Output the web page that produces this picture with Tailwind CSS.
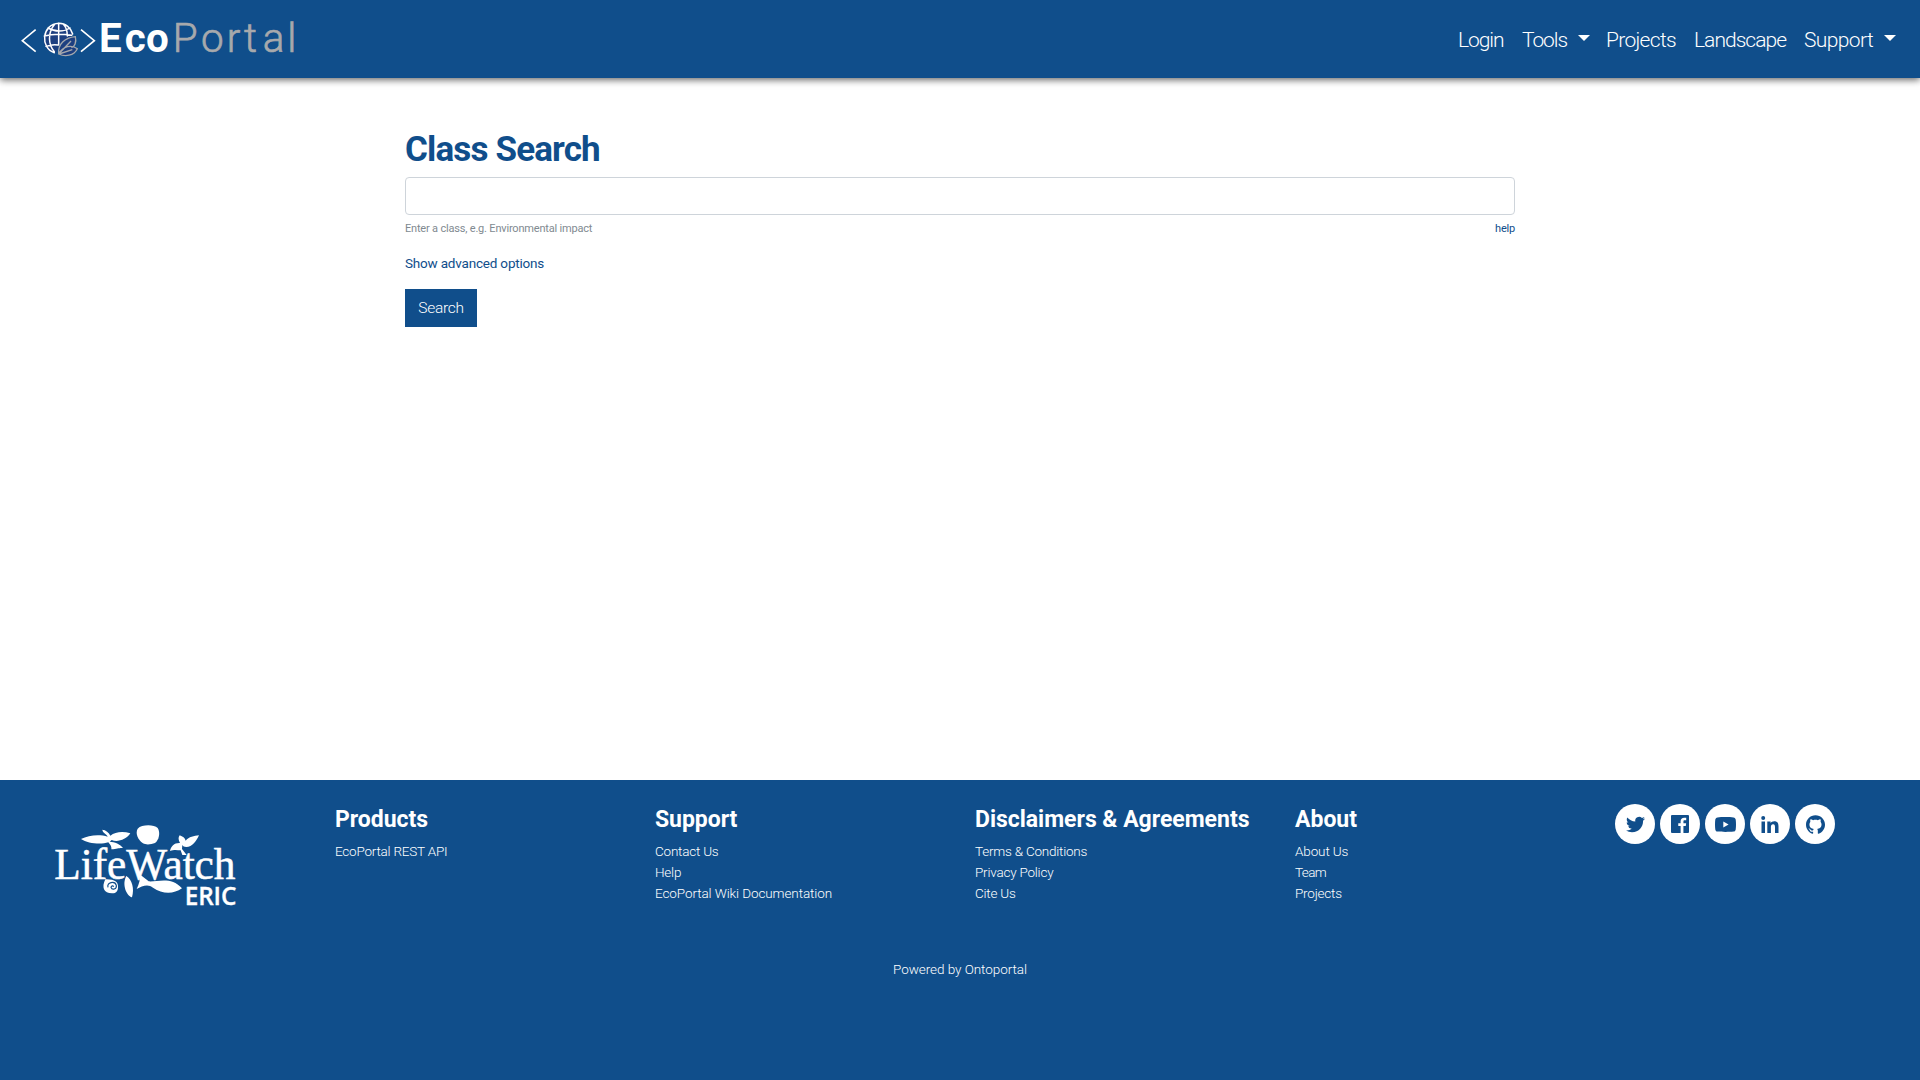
<!DOCTYPE html>
<html lang="en">
<head>
<meta charset="utf-8">
<title>EcoPortal - Class Search</title>
<script src="https://cdn.jsdelivr.net/npm/@tailwindcss/browser@4"></script>
</head>
<body class="flex h-screen flex-col overflow-hidden bg-white font-['Roboto',sans-serif]">
<header class="relative flex h-[78px] shrink-0 items-center justify-between bg-[#104e8b] pr-6 shadow-[0_2px_7px_rgba(0,0,0,0.6)]">
  <a href="#" aria-label="EcoPortal">
    <svg class="block h-[78px] w-[320px]" viewBox="0 0 960 234" fill="none">
      <g stroke="#fff" stroke-width="5">
        <path d="M107 89 67 122l40 33M243 89l40 33-40 33"/>
      </g>
      <path d="M178 71c-60 0-63 85-10 88l12-27 38-25c-3-22-20-36-40-36z" fill="#1d3f80"/>
      <path d="M163 158c-42-12-40-86 14-88 20 0 36 14 41 32M176 70v65M164 73c-21 25-20 60-1 82M190 73c8 8 12 20 12 35M144 84c20 12 48 12 66 0M133 108c20-5 55-6 82-2M138 139c14-5 23-6 36-4" stroke="#fff" stroke-width="4.5" stroke-linecap="round"/>
      <path d="M176 162c-3-30 18-49 50-52 4 17-2 30-12 33M176 162c13-24 39-29 56-16-10 22-37 25-56 16zM176 162l37-39M177 162l40-13" fill="#1d3f80" stroke="#a5a8ad" stroke-width="4"/>
      <text y="156" x="297 374 438" font-family="Roboto" font-weight="700" font-size="121" fill="#fff">Eco</text>
      <text y="156" x="518 603 680 732 788 862" font-family="Roboto" font-weight="300" font-size="121" fill="#a7a9ac" stroke="#a7a9ac" stroke-width="2">Portal</text>
    </svg>
  </a>
  <nav class="flex gap-4 pt-0.5 text-[21px] leading-8 font-light whitespace-nowrap text-white">
    <a href="#" class="w-[47px] -ml-px pr-px box-content tracking-[-1.05px]">Login</a>
    <a href="#" class="flex w-[68px] justify-between tracking-[-1.1px]">Tools<span class="mt-[11px] h-0 w-0 border-x-[6px] border-t-[6px] border-x-transparent border-t-white"></span></a>
    <a href="#" class="w-[72px] tracking-[-0.69px]">Projects</a>
    <a href="#" class="w-[94px] tracking-[-0.97px]">Landscape</a>
    <a href="#" class="flex w-[92px] justify-between tracking-[-0.62px]">Support<span class="mt-[11px] h-0 w-0 border-x-[6px] border-t-[6px] border-x-transparent border-t-white"></span></a>
  </nav>
</header>
<main class="mx-auto w-[1110px] grow pt-[50px] text-[13.5px] text-[#104e8b]">
  <h1 class="mb-[5px] text-[35px] leading-11 font-bold tracking-[-0.85px]">Class Search</h1>
  <input type="text" aria-label="Class" class="block h-[38px] w-full rounded border border-[#ced4da] bg-white px-3">
  <div class="mt-[5px] flex justify-between text-[11px] leading-[17px] tracking-[-0.19px]">
    <span class="text-[#818a91]">Enter a class, e.g. Environmental impact</span>
    <a href="#">help</a>
  </div>
  <a href="#" class="mt-4 block leading-5 tracking-[-0.19px]">Show advanced options</a>
  <button class="mt-4 block h-[38px] w-[72px] bg-[#104e8b] pt-px text-[15.5px] font-light tracking-[-0.3px] text-white">Search</button>
</main>
<footer class="h-[300px] shrink-0 bg-[#104e8b] pt-6 text-[13.5px] leading-[21px] text-white">
  <div class="grid h-[155px] grid-cols-[320px_320px_320px_320px_1fr] pl-[15px] tracking-[-0.22px]">
    <div class="pt-4 pl-[35px]">
      <svg class="block h-[90px] w-[190px] overflow-visible" viewBox="60 150 570 270" fill="#fff" aria-label="LifeWatch ERIC">
        <text x="73" y="326" font-family="Liberation Serif" font-size="132" textLength="543" lengthAdjust="spacingAndGlyphs" stroke="#fff" stroke-width="1.5">LifeWatch</text>
        <text x="464" y="404" font-family="Open Sans" font-weight="600" font-size="74" textLength="155" lengthAdjust="spacingAndGlyphs" stroke="#fff" stroke-width="1">ERIC</text>
        <path d="M153 207c23-12 56-15 80-7-3-8-15-11-16-21 10 1 20 8 24 18 15-12 38-14 60-7-12 19-39 28-56 20l-6 5c15 1 32 7 40 19-12-1-17 3-35 4 2-9-5-16-9-21-24 8-62 3-82-10z"/>
        <path d="M323 176c12-13 49-13 60-2 9 14 4 36-8 45-12 5-28 6-36 1-15-10-24-31-16-44z"/>
        <path d="M420 243c3-15 13-25 30-24-5-9-6-16-1-23 9 3 16 8 18 16 10-12 25-14 40-16-8 17-20 35-38 35-7 0-10-3-12-6l-1 12 14 18h-13l-5-14c-10 0-18-3-32 2z"/>
        <path d="M289 318c17 10 25 38 17 64-17-5-31-39-17-64zM329 313l27 21c27 2 68-16 100 21-26 18-58 18-87-2-15-13-33-5-49 4 7-15 12-29 9-44z"/>
        <path d="M226 328c-12 24-5 42 20 42 14 0 18-8 18-20 0-14-10-23-38-22z"/>
        <path d="M234 352c-5-15 21-21 25-6 2 12-13 15-16 6 1-5 6-6 8-2" fill="none" stroke="#104e8b" stroke-width="3.500"/>
      </svg>
    </div>
    <div>
      <h2 class="mt-0.5 mb-[7px] text-[23px] leading-7 font-bold tracking-[-0.05px]">Products</h2>
      <a href="#" class="block font-light">EcoPortal REST API</a>
    </div>
    <div>
      <h2 class="mt-0.5 mb-[7px] text-[23px] leading-7 font-bold tracking-[-0.05px]">Support</h2>
      <a href="#" class="block font-light">Contact Us</a>
      <a href="#" class="block font-light">Help</a>
      <a href="#" class="block font-light tracking-[-0.1px]">EcoPortal Wiki Documentation</a>
    </div>
    <div>
      <h2 class="mt-0.5 mb-[7px] text-[23px] leading-7 font-bold tracking-[-0.02px] whitespace-nowrap">Disclaimers &amp; Agreements</h2>
      <a href="#" class="block font-light">Terms &amp; Conditions</a>
      <a href="#" class="block font-light">Privacy Policy</a>
      <a href="#" class="block font-light">Cite Us</a>
    </div>
    <div class="grid grid-cols-[320px_1fr]">
      <div>
        <h2 class="mt-0.5 mb-[7px] text-[23px] leading-7 font-bold tracking-normal">About</h2>
        <a href="#" class="block font-light tracking-[-0.13px]">About Us</a>
        <a href="#" class="block font-light tracking-[-0.6px]">Team</a>
        <a href="#" class="block font-light">Projects</a>
      </div>
      <div class="flex gap-[5px] text-[#104e8b]">
        <a href="#" aria-label="Twitter" class="flex size-10 items-center justify-center rounded-full bg-white"><svg class="size-[19px]" viewBox="0 0 24 24" fill="currentColor"><path d="M23.953 4.57a10 10 0 01-2.825.775 4.958 4.958 0 002.163-2.723c-.951.555-2.005.959-3.127 1.184a4.92 4.92 0 00-8.384 4.482C7.69 8.095 4.067 6.13 1.64 3.162a4.822 4.822 0 00-.666 2.475c0 1.71.87 3.213 2.188 4.096a4.904 4.904 0 01-2.228-.616v.06a4.923 4.923 0 003.946 4.827 4.996 4.996 0 01-2.212.085 4.936 4.936 0 004.604 3.417 9.867 9.867 0 01-6.102 2.105c-.39 0-.779-.023-1.17-.067a13.995 13.995 0 007.557 2.209c9.053 0 13.998-7.496 13.998-13.985 0-.21 0-.42-.015-.63A9.935 9.935 0 0024 4.59z"/></svg></a>
        <a href="#" aria-label="Facebook" class="flex size-10 items-center justify-center rounded-full bg-white"><svg class="size-[18px]" viewBox="3 3 18 18" fill="currentColor"><path d="M20 3H4a1 1 0 0 0-1 1v16a1 1 0 0 0 1 1h8.615v-6.96h-2.338v-2.725h2.338v-2c0-2.325 1.42-3.592 3.5-3.592.699-.002 1.399.034 2.095.107v2.42h-1.435c-1.128 0-1.348.538-1.348 1.325v1.735h2.697l-.35 2.725h-2.348V21H20a1 1 0 0 0 1-1V4a1 1 0 0 0-1-1z"/></svg></a>
        <a href="#" aria-label="YouTube" class="flex size-10 items-center justify-center rounded-full bg-white"><svg class="h-[15px] w-[21px]" viewBox="0 0 21 15" fill="currentColor"><path fill-rule="evenodd" d="M10.500 0c3 0 6 .1 8 .4 1.300.2 2 1 2.200 2.200.4 3 .4 6.800 0 9.800-.2 1.200-.9 2-2.200 2.200-4 .5-12 .5-16 0-1.300-.2-2-1-2.200-2.200-.4-3-.4-6.800 0-9.800C.500 1.400 1.200.6 2.500.4c2-.3 5-.4 8-.4zM8.300 4.600v5.800l5.300-2.900z"/></svg></a>
        <a href="#" aria-label="LinkedIn" class="flex size-10 items-center justify-center rounded-full bg-white"><svg class="h-[17px] w-[18px]" viewBox="0 0 18 17" fill="currentColor"><circle cx="2.200" cy="2" r="2"/><path d="M.500 5.600h3.500V17H.500zM6.300 5.600h3.300v1.600c.7-1.200 1.900-1.900 3.600-1.900 3.500 0 4.300 2.200 4.300 5.300V17h-3.500v-5.700c0-1.500-.1-3-1.900-3s-2.200 1.400-2.200 3V17H6.300z"/></svg></a>
        <a href="#" aria-label="GitHub" class="flex size-10 items-center justify-center rounded-full bg-white"><svg class="size-[19px]" viewBox="0 0 24 24" fill="currentColor"><path d="M12 .297c-6.630 0-12 5.373-12 12 0 5.303 3.438 9.800 8.205 11.385.6.113.82-.258.82-.577 0-.285-.010-1.040-.015-2.040-3.338.724-4.042-1.610-4.042-1.610C4.422 18.070 3.633 17.700 3.633 17.700c-1.087-.744.084-.729.084-.729 1.205.084 1.838 1.236 1.838 1.236 1.070 1.835 2.809 1.305 3.495.998.108-.776.417-1.305.76-1.605-2.665-.3-5.466-1.332-5.466-5.930 0-1.310.465-2.380 1.235-3.220-.135-.303-.54-1.523.105-3.176 0 0 1.005-.322 3.300 1.230.96-.267 1.980-.399 3-.405 1.020.006 2.040.138 3 .405 2.280-1.552 3.285-1.230 3.285-1.230.645 1.653.24 2.873.12 3.176.765.840 1.230 1.910 1.230 3.220 0 4.610-2.805 5.625-5.475 5.920.42.360.81 1.096.81 2.220 0 1.606-.015 2.896-.015 3.286 0 .315.210.690.825.570C20.565 22.092 24 17.592 24 12.297c0-6.627-5.373-12-12-12"/></svg></a>
      </div>
    </div>
  </div>
  <p class="text-center font-light tracking-[-0.06px]">Powered by Ontoportal</p>
</footer>
</body>
</html>
